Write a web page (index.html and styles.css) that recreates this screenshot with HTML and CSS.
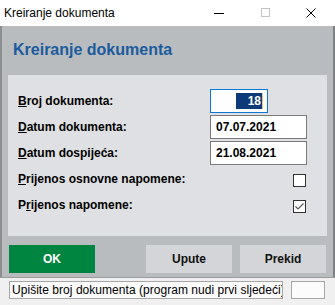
FILE: index.html
```html
<!DOCTYPE html>
<html>
  <head>
    <meta charset="utf-8" />
    <link rel="stylesheet" href="styles.css">
  </head>
  <body>
    <div class="window">
      <div class="titlebar">
        <span class="title">Kreiranje dokumenta</span>
        <div class="controls">
          <span class="ctl">
            <svg width="10" height="10" viewBox="0 0 10 10"><line x1="0" y1="5.5" x2="11" y2="5.5" stroke="#000" stroke-width="1" /></svg>
          </span>
          <span class="ctl">
            <svg width="10" height="10" viewBox="0 0 10 10"><rect x="1.5" y="0.5" width="8" height="8" fill="none" stroke="#c4c4c4" stroke-width="1" /></svg>
          </span>
          <span class="ctl">
            <svg width="10" height="10" viewBox="0 0 10 10"><path d="M0.5 0.5 L9.5 9.5 M9.5 0.5 L0.5 9.5" stroke="#000" stroke-width="1" /></svg>
          </span>
        </div>
      </div>

      <div class="main">
        <h1 class="heading">Kreiranje dokumenta</h1>

        <div class="panel">
          <div class="lbl"><u>B</u>roj dokumenta:</div>
          <div class="field field-num">
            <span class="sel">18</span><span class="caret"></span>
          </div>

          <div class="lbl"><u>D</u>atum dokumenta:</div>
          <div class="field">07.07.2021</div>

          <div class="lbl"><u>D</u>atum dospijeća:</div>
          <div class="field">21.08.2021</div>

          <div class="lbl"><u>P</u>rijenos osnovne napomene:</div>
          <div class="check"></div>

          <div class="lbl">P<u>r</u>ijenos napomene:</div>
          <div class="check">
            <svg width="11" height="11" viewBox="0 0 11 11"><polyline points="1.5,5.5 4,8 9.5,2.5" fill="none" stroke="#5a5a5a" stroke-width="1.2" /></svg>
          </div>
        </div>

        <div class="buttons">
          <button class="btn btn-ok">OK</button>
          <button class="btn">Upute</button>
          <button class="btn">Prekid</button>
        </div>
      </div>

      <div class="status">
        <div class="status-field status-text">Upišite broj dokumenta (program nudi prvi sljedeći)</div>
        <div class="status-field status-aux"></div>
      </div>
    </div>
  </body>
</html>
```

FILE: styles.css
```css
body {
  margin: 0;
  font-family: "Liberation Sans", Arial, sans-serif;
}

.window {
  width: 335px;
  height: 305px;
  display: flex;
  flex-direction: column;
  background-color: #b9bcbf;
  overflow: hidden;
}

/* window title bar */
.titlebar {
  height: 26px;
  display: flex;
  background-color: #fff;
  flex-shrink: 0;
}
.title {
  flex: 1;
  padding-left: 4px;
  font-size: 12px;
  line-height: 26px;
  color: #000;
}
.controls {
  display: flex;
  padding-right: 1px;
}
.ctl {
  width: 46px;
  display: flex;
  align-items: center;
  justify-content: center;
}

/* dialog body */
.main {
  flex: 1;
  display: flex;
  flex-direction: column;
  padding: 0 6px;
  border-left: 2px solid #8c8e90;
  border-right: 2px solid #7e8082;
}
.heading {
  margin: 0;
  padding: 15px 0 0 5px;
  font-size: 16px;
  line-height: 18px;
  font-weight: bold;
  color: #1b5b9d;
}

.panel {
  margin-top: 16px;
  padding: 13px 20px 18px 10px;
  background-color: #dfe0e3;
  display: grid;
  grid-template-columns: 1fr 97px;
  grid-auto-rows: 26px;
  align-items: center;
}
.lbl {
  font-size: 12px;
  font-weight: bold;
  color: #000;
}

.field {
  box-sizing: border-box;
  width: 97px;
  height: 24px;
  padding-left: 5px;
  display: flex;
  align-items: center;
  background-color: #fff;
  border: 1px solid #7a7a7a;
  font-size: 12px;
  font-weight: bold;
  color: #000;
}
.field-num {
  width: 58px;
  padding: 0 4px 0 0;
  justify-content: flex-end;
  border-color: #0a78d4;
}
.sel {
  width: 25px;
  height: 16px;
  padding-right: 1px;
  line-height: 16px;
  text-align: right;
  background-color: #0c3a78;
  color: #fff;
}
.caret {
  width: 1px;
  height: 16px;
  background-color: #e6c794;
}

.check {
  justify-self: end;
  box-sizing: border-box;
  width: 13px;
  height: 13px;
  margin: 3px 1px 0 0;
  display: flex;
  align-items: center;
  justify-content: center;
  background-color: #fff;
  border: 1px solid #333;
}

/* bottom buttons */
.buttons {
  display: flex;
  gap: 8px;
  margin-top: 9px;
  padding: 0 1px;
}
.btn {
  width: 86px;
  height: 28px;
  border: none;
  padding: 0;
  font-family: "Liberation Sans", Arial, sans-serif;
  font-size: 12px;
  font-weight: bold;
  color: #111;
  background-color: #d3d5d8;
}
.btn-ok {
  margin-right: auto;
  background-color: #008540;
  color: #fff;
}

/* status bar */
.status {
  height: 24px;
  flex-shrink: 0;
  display: flex;
  gap: 8px;
  padding: 3px 0 0 9px;
  border-top: 1px solid #9b9b9b;
  background-color: #f0f0f0;
}
.status-field {
  box-sizing: border-box;
  height: 18px;
  border: 1px solid #a6a6a6;
  background-color: #fbfbfb;
}
.status-text {
  width: 274px;
  padding-left: 2px;
  overflow: hidden;
  white-space: nowrap;
  font-size: 12px;
  letter-spacing: 0.04px;
  line-height: 16px;
  color: #000;
}
.status-aux {
  width: 34px;
}
```
